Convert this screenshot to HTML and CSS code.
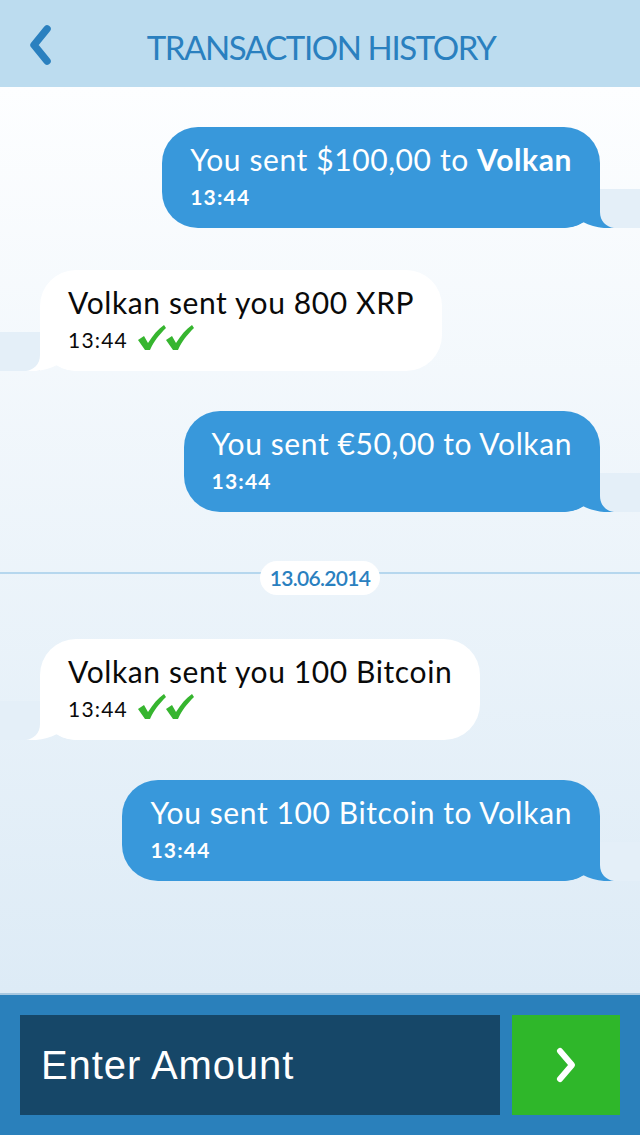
FILE: index.html
```html
<!DOCTYPE html>
<html>
<head>
<meta charset="utf-8">
<link rel="stylesheet" href="styles.css">
</head>
<body>
<div class="app">
  <header class="topbar">
    <svg class="back" width="24" height="40" viewBox="0 0 24 40"><path d="M19 4 L6 20 L19 36" fill="none" stroke="#2a80bf" stroke-width="7.5" stroke-linecap="round" stroke-linejoin="round"/></svg>
    <h1 class="title">TRANSACTION HISTORY</h1>
  </header>
  <main class="feed">
    <div class="msg sent m1">
      <div class="text">You sent $100,00 to <b>Volkan</b></div>
      <div class="time">13:44</div>
      <svg class="tail" width="80" height="40" viewBox="0 0 80 40"><rect x="40" y="1" width="40" height="39" fill="#e4eff8"/><path d="M0 0 L40 0 L40 24 C40 33 46 39 54 40 C45 41 32 39 23 34 C19 37 13 39 4 40 L0 40 Z" fill="#3898db"/></svg>
    </div>
    <div class="msg recv m2">
      <div class="text">Volkan sent you 800 XRP</div>
      <div class="time">13:44 <span class="checks"><svg width="58" height="26" viewBox="0 0 58 26"><path d="M1 15 L7 11 L11 18 C16 10 21 4 27 0 L29 3 C22 10 17 16 13 25 L8 25 Z" fill="#36b52f"/><path d="M29 15 L35 11 L39 18 C44 10 49 4 55 0 L57 3 C50 10 45 16 41 25 L36 25 Z" fill="#36b52f"/></svg></span></div>
      <svg class="tail" width="80" height="40" viewBox="0 0 80 40"><rect x="40" y="1" width="40" height="39" fill="#e4eff8"/><path d="M0 0 L40 0 L40 24 C40 33 46 39 54 40 C45 41 32 39 23 34 C19 37 13 39 4 40 L0 40 Z" fill="#ffffff"/></svg>
    </div>
    <div class="msg sent m3">
      <div class="text">You sent €50,00 to Volkan</div>
      <div class="time">13:44</div>
      <svg class="tail" width="80" height="40" viewBox="0 0 80 40"><rect x="40" y="1" width="40" height="39" fill="#e4eff8"/><path d="M0 0 L40 0 L40 24 C40 33 46 39 54 40 C45 41 32 39 23 34 C19 37 13 39 4 40 L0 40 Z" fill="#3898db"/></svg>
    </div>
    <div class="divider"><span class="date">13.06.2014</span></div>
    <div class="msg recv m4">
      <div class="text">Volkan sent you 100 Bitcoin</div>
      <div class="time">13:44 <span class="checks"><svg width="58" height="26" viewBox="0 0 58 26"><path d="M1 15 L7 11 L11 18 C16 10 21 4 27 0 L29 3 C22 10 17 16 13 25 L8 25 Z" fill="#36b52f"/><path d="M29 15 L35 11 L39 18 C44 10 49 4 55 0 L57 3 C50 10 45 16 41 25 L36 25 Z" fill="#36b52f"/></svg></span></div>
      <svg class="tail" width="80" height="40" viewBox="0 0 80 40"><rect x="40" y="1" width="40" height="39" fill="#e4eff8"/><path d="M0 0 L40 0 L40 24 C40 33 46 39 54 40 C45 41 32 39 23 34 C19 37 13 39 4 40 L0 40 Z" fill="#ffffff"/></svg>
    </div>
    <div class="msg sent m5">
      <div class="text">You sent 100 Bitcoin to Volkan</div>
      <div class="time">13:44</div>
      <svg class="tail" width="80" height="40" viewBox="0 0 80 40"><rect x="40" y="1" width="40" height="39" fill="#e4eff8"/><path d="M0 0 L40 0 L40 24 C40 33 46 39 54 40 C45 41 32 39 23 34 C19 37 13 39 4 40 L0 40 Z" fill="#3898db"/></svg>
    </div>
  </main>
  <footer class="composer">
    <div class="amount">Enter Amount</div>
    <button class="go"><svg width="30" height="40" viewBox="0 0 30 40"><path d="M9 6 L21 20 L9 34" fill="none" stroke="#ffffff" stroke-width="6" stroke-linecap="round" stroke-linejoin="round"/></svg></button>
  </footer>
</div>
</body>
</html>
```

FILE: styles.css
```css
* { box-sizing: border-box; }
html, body { margin: 0; padding: 0; }
body { font-family: Lato, "Open Sans", sans-serif; width: 640px; height: 1135px; overflow: hidden; }
.app { width: 640px; height: 1135px; display: flex; flex-direction: column; }

.topbar {
  height: 87px; flex: none;
  background: #bcdcef;
  display: flex; align-items: center; justify-content: center;
  position: relative;
}
.back { position: absolute; left: 28px; top: 25px; }
.title {
  margin: 6px 0 0 0; font-family: Lato, sans-serif; font-weight: 400; font-size: 33px; letter-spacing: -1.4px;
  color: #2a80bf; padding-left: 2px;
}

.feed {
  flex: 1;
  background: linear-gradient(#fdfeff, #ddebf6);
  display: flex; flex-direction: column;
  padding-top: 40px;
  overflow: hidden;
}
.msg {
  position: relative;
  height: 101px;
  border-radius: 36px;
  padding: 14px 28px 0 28px;
  max-width: 560px;
}
.msg .text { font-size: 30px; line-height: 36px; white-space: nowrap; position: relative; z-index: 1; letter-spacing: 0.6px; }
.msg .time { font-size: 21px; line-height: 40px; height: 40px; letter-spacing: 1.2px; position: relative; z-index: 1; display: flex; align-items: center; gap: 9px; }
.msg b { font-weight: 700; }
.sent { align-self: flex-end; margin-right: 40px; background: #3898db; color: #fff; }
.sent .time { font-weight: 700; }
.recv { align-self: flex-start; margin-left: 40px; background: #fff; color: #0a0a0a; }
.tail { position: absolute; bottom: 0; right: -40px; }
.recv .tail { right: auto; left: -40px; transform: scaleX(-1); }
.checks { display: inline-flex; margin-top: -4px; }

.m2 { margin-top: 42px; }
.m3 { margin-top: 40px; }
.m4 { margin-top: 44px; }
.m5 { margin-top: 40px; }

.divider {
  margin-top: 49px;
  height: 34px; position: relative;
  display: flex; justify-content: center; align-items: center;
}
.divider::before {
  content: ""; position: absolute; left: 0; right: 0; top: 11px; height: 2px; background: #b6d7ee;
}
.date {
  position: relative; background: #fff; border-radius: 17px;
  width: 120px; height: 34px; line-height: 34px; text-align: center;
  font-family: Lato, sans-serif; font-weight: 600;
  font-size: 21px; color: #2a80bf; letter-spacing: -0.7px;
}

.composer {
  height: 142px; flex: none;
  background: #2a80bb;
  border-top: 2px solid #a8c8e0;
  display: flex; gap: 12px; padding: 20px;
}
.amount {
  width: 480px; height: 100px;
  background: #164768; color: #fff;
  font-family: "Liberation Sans", Arial, sans-serif; font-size: 40px; letter-spacing: 0.9px;
  line-height: 100px; padding-left: 21px;
}
.go {
  width: 108px; height: 100px; border: 0; padding: 0; margin: 0;
  background: #2fb72a;
  display: flex; align-items: center; justify-content: center;
}
```
